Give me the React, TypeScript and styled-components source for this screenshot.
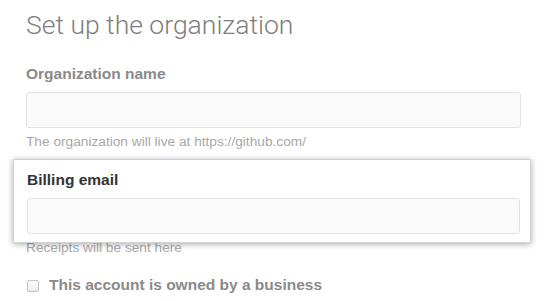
import React from "react";
import styled, { createGlobalStyle } from "styled-components";

const Global = createGlobalStyle`
  html, body { margin: 0; padding: 0; background: #fff; }
  body { font-family: "Liberation Sans", Arial, Helvetica, sans-serif; }
  * { box-sizing: border-box; }
`;

const Page = styled.div`
  width: 549px;
  height: 301px;
  overflow: hidden;
  padding: 9px 28px 0 26px;
`;

const Title = styled.h1`
  margin: 0 0 23px;
  font-family: Roboto, "Liberation Sans", Arial, sans-serif;
  font-size: 26.5px;
  line-height: 32px;
  font-weight: 300;
  color: #7e7e7e;
  letter-spacing: 0;
`;

const Group = styled.div`
  display: flex;
  flex-direction: column;
`;

const Label = styled.label<{ $active?: boolean }>`
  font-size: 15.5px;
  line-height: 20px;
  font-weight: 700;
  color: ${(p) => (p.$active ? "#333" : "#8a8a8a")};
  margin-bottom: 7.5px;
`;

const Input = styled.input`
  display: block;
  width: 100%;
  height: 36.5px;
  margin: 0;
  padding: 6px 8px;
  background: #fafafa;
  border: 1px solid #e2e2e2;
  border-radius: 3px;
  outline: none;
  font: inherit;
`;

const Help = styled.p<{ $shift?: number }>`
  margin: ${(p) => p.$shift ?? 5}px 0 0;
  font-size: 13.7px;
  line-height: 18px;
  color: #a8a8a8;
`;

const Highlight = styled.div`
  position: relative;
  z-index: 1;
  margin: 8px -10px 0 -13px;
  padding: 10px 10px 7.5px 13px;
  background: #fff;
  border: 1px solid #d2d2d2;
  box-shadow: 0 1px 6px rgba(0, 0, 0, 0.35);
`;

const CheckRow = styled.label`
  display: flex;
  align-items: center;
  gap: 10px;
  margin-top: 18.5px;
  margin-left: 1px;
  font-size: 15.5px;
  line-height: 20px;
  font-weight: 700;
  color: #8a8a8a;
`;

const Box = styled.span`
  display: inline-block;
  width: 12px;
  height: 12px;
  margin-top: 2px;
  border: 1px solid #c4c4c4;
  border-radius: 2px;
  background: linear-gradient(#fdfdfd, #ececec);
`;

export default function App() {
  return (
    <>
      <Global />
      <Page>
        <Title>Set up the organization</Title>
        <Group>
          <Label>Organization name</Label>
          <Input type="text" />
          <Help>The organization will live at https://github.com/</Help>
        </Group>
        <Highlight>
          <Group>
            <Label $active>Billing email</Label>
            <Input type="email" />
          </Group>
        </Highlight>
        <Help $shift={-4}>Receipts will be sent here</Help>
        <CheckRow>
          <Box />
          This account is owned by a business
        </CheckRow>
      </Page>
    </>
  );
}
